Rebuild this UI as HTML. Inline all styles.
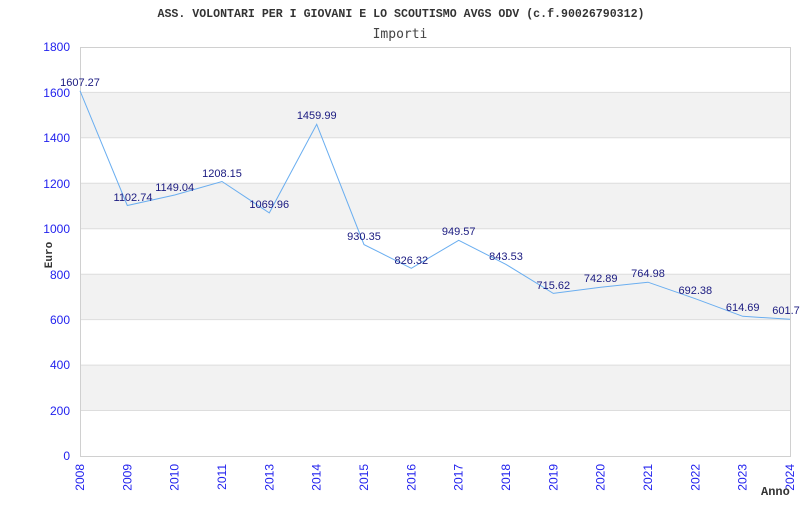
<!DOCTYPE html><html><head><style>body{margin:0;background:#fff}</style></head><body>
<svg width="800" height="500" xmlns="http://www.w3.org/2000/svg" font-family="Liberation Sans, sans-serif">
<text x="401" y="17" text-anchor="middle" font-family="Liberation Mono, monospace" font-weight="bold" font-size="11.6" fill="#333">ASS. VOLONTARI PER I GIOVANI E LO SCOUTISMO AVGS ODV (c.f.90026790312)</text>
<text x="400" y="38" text-anchor="middle" font-family="DejaVu Sans Mono, monospace" font-size="13" fill="#444">Importi</text>
<g fill="#f2f2f2"><rect x="80" y="92.4" width="710" height="45.4"/><rect x="80" y="183.3" width="710" height="45.4"/><rect x="80" y="274.2" width="710" height="45.4"/><rect x="80" y="365.1" width="710" height="45.4"/></g>
<g stroke="#ddd" stroke-width="1"><line x1="80" x2="790" y1="92.4" y2="92.4"/><line x1="80" x2="790" y1="137.8" y2="137.8"/><line x1="80" x2="790" y1="183.3" y2="183.3"/><line x1="80" x2="790" y1="228.7" y2="228.7"/><line x1="80" x2="790" y1="274.2" y2="274.2"/><line x1="80" x2="790" y1="319.6" y2="319.6"/><line x1="80" x2="790" y1="365.1" y2="365.1"/><line x1="80" x2="790" y1="410.5" y2="410.5"/></g>
<rect x="80.5" y="47.5" width="710" height="409" fill="none" stroke="#d0d0d0"/>
<g fill="#2222ee" font-size="12" text-anchor="end"><text x="70" y="51">1800</text><text x="70" y="97">1600</text><text x="70" y="142">1400</text><text x="70" y="188">1200</text><text x="70" y="233">1000</text><text x="70" y="279">800</text><text x="70" y="324">600</text><text x="70" y="369">400</text><text x="70" y="415">200</text><text x="70" y="460">0</text></g>
<text transform="translate(52,255) rotate(-90)" text-anchor="middle" font-family="Liberation Mono, monospace" font-weight="bold" font-size="11" fill="#333">Euro</text>
<polyline fill="none" stroke="#6aaef0" stroke-width="1" points="80,90.8 127.3,205.5 174.7,195 222,181.5 269.3,212.9 316.7,124.3 364,244.6 411.3,268.3 458.7,240.3 506,264.4 553.3,293.4 600.7,287.2 648,282.2 695.3,298.7 742.7,316.3 790,319.3"/>
<g fill="#1a1a80" font-size="11" text-anchor="middle">
<text x="80" y="86">1607.27</text><text x="133" y="201">1102.74</text><text x="174.7" y="191">1149.04</text><text x="222" y="177">1208.15</text><text x="269.3" y="208">1069.96</text><text x="316.7" y="119">1459.99</text><text x="364" y="240">930.35</text><text x="411.3" y="264">826.32</text><text x="458.7" y="235">949.57</text><text x="506" y="260">843.53</text><text x="553.3" y="289">715.62</text><text x="600.7" y="282">742.89</text><text x="648" y="277">764.98</text><text x="695.3" y="294">692.38</text><text x="742.7" y="311">614.69</text><text x="786" y="314">601.7</text></g>
<g fill="#2222ee" font-size="12" text-anchor="end">
<text transform="translate(84,464) rotate(-90)">2008</text><text transform="translate(131.3,464) rotate(-90)">2009</text><text transform="translate(178.7,464) rotate(-90)">2010</text><text transform="translate(226,464) rotate(-90)">2011</text><text transform="translate(273.3,464) rotate(-90)">2013</text><text transform="translate(320.7,464) rotate(-90)">2014</text><text transform="translate(368,464) rotate(-90)">2015</text><text transform="translate(415.3,464) rotate(-90)">2016</text><text transform="translate(462.7,464) rotate(-90)">2017</text><text transform="translate(510,464) rotate(-90)">2018</text><text transform="translate(557.3,464) rotate(-90)">2019</text><text transform="translate(604.7,464) rotate(-90)">2020</text><text transform="translate(652,464) rotate(-90)">2021</text><text transform="translate(699.3,464) rotate(-90)">2022</text><text transform="translate(746.7,464) rotate(-90)">2023</text><text transform="translate(794,464) rotate(-90)">2024</text></g>
<text x="761" y="495" font-family="Liberation Mono, monospace" font-weight="bold" font-size="12" fill="#333">Anno</text>
</svg></body></html>
